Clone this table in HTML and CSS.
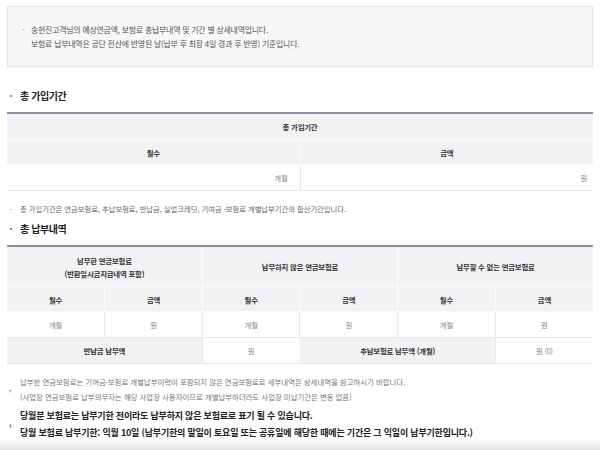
FILE: index.html
```html
<!DOCTYPE html>
<html lang="ko">
<head>
<meta charset="utf-8">
<link rel="stylesheet" href="styles.css">
</head>
<body>
<div class="page">
  <div class="info">
    <div class="info-row"><span class="dot">·</span><div>송현진고객님의 예상연금액, 보험료 총납부내역 및 기간 별 상세내역입니다.<br>보험료 납부내역은 공단 전산에 반영된 날(납부 후 최장 4일 경과 후 반영) 기준입니다.</div></div>
  </div>

  <h2 class="heading heading-first"><span class="hdot"></span>총 가입기간</h2>
  <table class="tbl tbl1">
    <tr><th colspan="2" class="th-top">총 가입기간</th></tr>
    <tr><th>월수</th><th>금액</th></tr>
    <tr><td class="r r1">개월</td><td class="r r2">원</td></tr>
  </table>
  <p class="note"><span class="ndot">·</span>총 가입기간은 연금보험료, 추납보험료, 반납금, 실업크레딧, 기여금 ·보험료 개별납부기간의 합산기간입니다.</p>

  <h2 class="heading"><span class="hdot"></span>총 납부내역</h2>
  <table class="tbl tbl2">
    <colgroup><col><col><col><col><col><col></colgroup>
    <tr class="tall"><th colspan="2">납부한 연금보험료<br>(반환일시금지급내역 포함)</th><th colspan="2">납부하지 않은 연금보험료</th><th colspan="2">납부할 수 없는 연금보험료</th></tr>
    <tr><th>월수</th><th>금액</th><th>월수</th><th>금액</th><th>월수</th><th>금액</th></tr>
    <tr><td>개월</td><td>원</td><td>개월</td><td>원</td><td>개월</td><td>원</td></tr>
    <tr><th colspan="2">반납금 납부액</th><td>원</td><th colspan="2">추납보험료 납부액 (개월)</th><td>원 (0)</td></tr>
  </table>

  <div class="foot foot-small"><span class="fdot">,</span><div>납부한 연금보험료는 기여금·보험료 개별납부이력이 포함되지 않은 연금보험료로 세부내역은 상세내역을 참고하시기 바랍니다.<br>(사업장 연금보험료 납부의무자는 해당 사업장 사용자이므로 개별납부하더라도 사업장 미납기간은 변동 없음)</div></div>
  <div class="foot foot-bold"><span class="fdot">,</span><div>당월분 보험료는 납부기한 전이라도 납부하지 않은 보험료로 표기 될 수 있습니다.<br>당월 보험료 납부기한: 익월 10일 (납부기한의 말일이 토요일 또는 공휴일에 해당한 때에는 기간은 그 익일이 납부기한입니다.)</div></div>
</div>
<div class="shade"></div>
</body>
</html>
```
FILE: styles.css
```css
html, body {
  margin: 0;
  padding: 0;
  background: #fff;
  overflow: hidden;
}
body {
  font-family: "Noto Sans CJK KR", "Noto Sans", sans-serif;
  color: #333;
}
.page {
  padding: 6px 7px 0 7px;
}
.info {
  background: #f7f7f7;
  border: 1px solid #e6e6e6;
  padding: 16px 14px 15px 14px;
  font-size: 7.9px;
  letter-spacing: -0.2px;
  line-height: 14px;
  color: #555;
}
.info-row {
  display: flex;
}
.info-row .dot {
  width: 9px;
  color: #777;
}
.heading {
  display: flex;
  align-items: center;
  margin: 6px 0 8px 0;
  font-size: 10px;
  line-height: 16px;
  letter-spacing: -0.4px;
  font-weight: 700;
  color: #222;
}
.heading-first {
  margin-top: 21px;
}
.hdot {
  width: 2px;
  height: 2px;
  border-radius: 50%;
  background: #5b5f8e;
  margin: 0 8px 0 3px;
}
.tbl {
  width: 100%;
  border-collapse: collapse;
  table-layout: fixed;
  border-top: 2px solid #8d8fa6;
  border-bottom: 1px solid #e2e2e2;
  font-size: 7.4px;
  letter-spacing: -0.2px;
}
.tbl th, .tbl td {
  height: 24px;
  padding: 0;
  text-align: center;
  vertical-align: middle;
}
.tbl th {
  background: #f2f2f4;
  font-weight: 700;
  color: #333;
  border-bottom: 1px solid #fbfbfb;
  border-left: 1px solid #fbfbfb;
}
.tbl td {
  color: #888;
  border-bottom: 1px solid #e8e8e8;
  border-left: 1px solid #e8e8e8;
}
.tbl tr > :first-child {
  border-left: none;
}
.tbl1 .th-top {
  height: 25px;
}
.tbl1 td.r {
  text-align: right;
  height: 25px;
}
.tbl1 td.r1 {
  padding-right: 12px;
}
.tbl1 td.r2 {
  padding-right: 6px;
}
.tbl2 tr.tall th {
  height: 39px;
  line-height: 13px;
}
.tbl2 tr:last-child th {
  border-bottom: none;
}
.tbl2 tr:last-child td {
  border-bottom: none;
}
.tbl2 td {
  height: 25px;
}
.note {
  margin: 12px 0 0 0;
  font-size: 7.3px;
  line-height: 12px;
  color: #666;
  display: flex;
}
.ndot {
  width: 13px;
  padding-left: 3px;
  box-sizing: border-box;
  color: #777;
}
.foot {
  display: flex;
  align-items: center;
}
.fdot {
  width: 13px;
  padding-left: 2px;
  box-sizing: border-box;
  color: #555;
  font-size: 8px;
  line-height: 8px;
  flex: none;
  position: relative;
  top: -1px;
}
.foot-small {
  margin-top: 10px;
  font-size: 7.4px;
  line-height: 15px;
  color: #777;
}
.foot-bold {
  margin-top: 3px;
  font-size: 9px;
  line-height: 17px;
  font-weight: 700;
  letter-spacing: -0.2px;
  color: #222;
}
.shade {
  position: fixed;
  left: 0;
  right: 0;
  bottom: 0;
  height: 12px;
  background: linear-gradient(to bottom, rgba(0,0,0,0), rgba(0,0,0,0.1));
}
```
